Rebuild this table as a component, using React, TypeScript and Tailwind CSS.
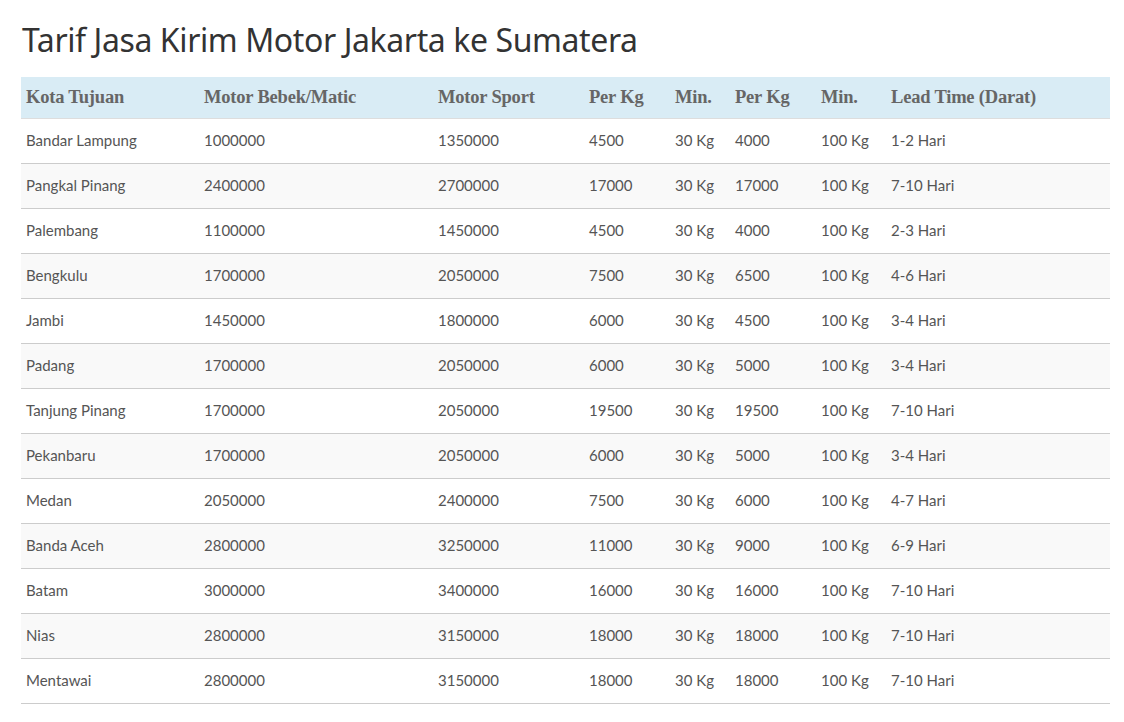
import React from "react";

const rows: string[][] = [
  ["Bandar Lampung", "1000000", "1350000", "4500", "30 Kg", "4000", "100 Kg", "1-2 Hari"],
  ["Pangkal Pinang", "2400000", "2700000", "17000", "30 Kg", "17000", "100 Kg", "7-10 Hari"],
  ["Palembang", "1100000", "1450000", "4500", "30 Kg", "4000", "100 Kg", "2-3 Hari"],
  ["Bengkulu", "1700000", "2050000", "7500", "30 Kg", "6500", "100 Kg", "4-6 Hari"],
  ["Jambi", "1450000", "1800000", "6000", "30 Kg", "4500", "100 Kg", "3-4 Hari"],
  ["Padang", "1700000", "2050000", "6000", "30 Kg", "5000", "100 Kg", "3-4 Hari"],
  ["Tanjung Pinang", "1700000", "2050000", "19500", "30 Kg", "19500", "100 Kg", "7-10 Hari"],
  ["Pekanbaru", "1700000", "2050000", "6000", "30 Kg", "5000", "100 Kg", "3-4 Hari"],
  ["Medan", "2050000", "2400000", "7500", "30 Kg", "6000", "100 Kg", "4-7 Hari"],
  ["Banda Aceh", "2800000", "3250000", "11000", "30 Kg", "9000", "100 Kg", "6-9 Hari"],
  ["Batam", "3000000", "3400000", "16000", "30 Kg", "16000", "100 Kg", "7-10 Hari"],
  ["Nias", "2800000", "3150000", "18000", "30 Kg", "18000", "100 Kg", "7-10 Hari"],
  ["Mentawai", "2800000", "3150000", "18000", "30 Kg", "18000", "100 Kg", "7-10 Hari"],
];

const headers = ["Kota Tujuan", "Motor Bebek/Matic", "Motor Sport", "Per Kg", "Min.", "Per Kg", "Min.", "Lead Time (Darat)"];

export default function App() {
  return (
    <div className="min-h-[722px] bg-white px-[21px] pt-[18px] font-['Open_Sans',sans-serif]">
      <h1 className="text-[32px] leading-[44px] text-[#333] font-['Noto_Sans',sans-serif] tracking-[-0.4px] pl-[1px]">
        Tarif Jasa Kirim Motor Jakarta ke Sumatera
      </h1>
      <table className="mt-[15px] w-[1089px] table-fixed border-collapse">
        <colgroup>
          <col className="w-[178px]" />
          <col className="w-[234px]" />
          <col className="w-[151px]" />
          <col className="w-[86px]" />
          <col className="w-[60px]" />
          <col className="w-[86px]" />
          <col className="w-[70px]" />
          <col className="w-[224px]" />
        </colgroup>
        <thead>
          <tr className="h-[41px] bg-[#d9ecf5] border-b border-[#ddd]">
            {headers.map((h, i) => (
              <th
                key={i}
                className="text-left pl-[5px] pt-[2px] font-bold text-[18.5px] text-[#666] font-['Liberation_Serif',serif] whitespace-nowrap tracking-[-0.2px]"
              >
                {h}
              </th>
            ))}
          </tr>
        </thead>
        <tbody>
          {rows.map((r, ri) => (
            <tr key={ri} className={`h-[45px] border-b border-[#ccc] ${ri % 2 === 1 ? "bg-[#f9f9f9]" : "bg-white"}`}>
              {r.map((c, ci) => (
                <td key={ci} className="pl-[5px] text-[15px] text-[#555] font-['Lato',sans-serif] whitespace-nowrap">
                  {c}
                </td>
              ))}
            </tr>
          ))}
        </tbody>
      </table>
    </div>
  );
}
